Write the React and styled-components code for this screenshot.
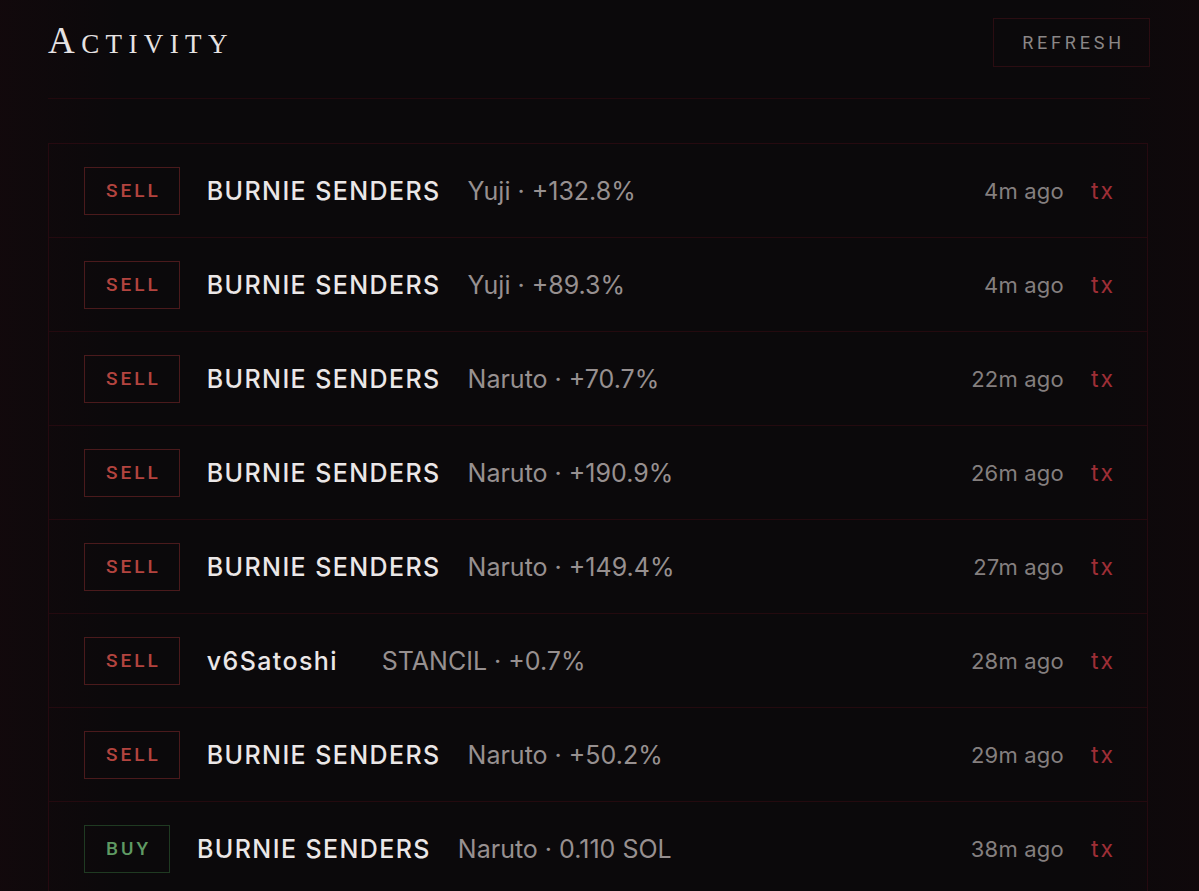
import React from 'react'
import styled, { createGlobalStyle } from 'styled-components'

const GlobalStyle = createGlobalStyle`
  html, body {
    margin: 0;
    padding: 0;
    background: #0b090b;
  }
  body {
    font-family: Inter, "Noto Sans", sans-serif;
    color: #e8e4e4;
  }
`

const Page = styled.div`
  min-height: 100vh;
  padding: 18px 49px 0 48px;
  box-sizing: border-box;
  background:
    linear-gradient(90deg, rgba(40, 8, 14, 0.22) 0%, rgba(0,0,0,0) 10%, rgba(0,0,0,0) 90%, rgba(30, 6, 10, 0.22) 100%),
    #0b090b;
`

const Header = styled.header`
  display: flex;
  align-items: center;
  justify-content: space-between;
  padding-bottom: 31px;
  border-bottom: 1px solid #22090e;
`

const Title = styled.h1`
  margin: -4px 0 0;
  font-family: "Liberation Serif", "DejaVu Serif", serif;
  font-weight: 400;
  font-size: 27px;
  text-transform: uppercase;
  letter-spacing: 6.4px;
  color: #e6e2e2;
  line-height: 1;
  &::first-letter {
    font-size: 37px;
  }
`

const RefreshButton = styled.button`
  width: 157px;
  height: 49px;
  background: transparent;
  border: 1px solid #2b0d12;
  color: #8a8686;
  font-family: Roboto, "Liberation Sans", sans-serif;
  font-size: 18px;
  letter-spacing: 3.8px;
  padding: 0 0 0 4px;
  text-transform: uppercase;
  cursor: pointer;
`

const List = styled.div`
  margin-top: 44px;
  margin-right: 2px;
  border: 1px solid #260a10;
  border-bottom: none;
`

const Row = styled.div`
  display: flex;
  align-items: center;
  height: 94px;
  padding: 0 34px 0 35px;
  box-sizing: border-box;
  border-bottom: 1px solid #240a0f;
  gap: 27px;
`

const Badge = styled.span`
  display: inline-flex;
  align-items: center;
  justify-content: center;
  height: 48px;
  padding: 0 18px 0 21px;
  box-sizing: border-box;
  border: 1.5px solid ${p => (p.$buy ? '#1f3a22' : '#4a1a1c')};
  color: ${p => (p.$buy ? '#5f9a63' : '#b3443f')};
  font-family: Roboto, "Liberation Sans", sans-serif;
  font-weight: 500;
  font-size: 19px;
  letter-spacing: 3px;
`

const Name = styled.span`
  min-width: 148px;
  font-size: 25px;
  font-weight: 500;
  color: #ebe7e7;
  letter-spacing: 1.4px;
`

const Detail = styled.span`
  flex: 1;
  font-size: 25px;
  font-weight: 400;
  color: #979090;
  letter-spacing: 0;
`

const Time = styled.span`
  font-size: 22px;
  color: #847f7f;
  letter-spacing: 0.2px;
`

const TxLink = styled.a`
  font-size: 23px;
  color: #9e2e36;
  text-decoration: none;
  letter-spacing: 2px;
  margin-right: -2px;
`

const rows = [
  { type: 'SELL', name: 'BURNIE SENDERS', detail: 'Yuji · +132.8%', time: '4m ago' },
  { type: 'SELL', name: 'BURNIE SENDERS', detail: 'Yuji · +89.3%', time: '4m ago' },
  { type: 'SELL', name: 'BURNIE SENDERS', detail: 'Naruto · +70.7%', time: '22m ago' },
  { type: 'SELL', name: 'BURNIE SENDERS', detail: 'Naruto · +190.9%', time: '26m ago' },
  { type: 'SELL', name: 'BURNIE SENDERS', detail: 'Naruto · +149.4%', time: '27m ago' },
  { type: 'SELL', name: 'v6Satoshi', detail: 'STANCIL · +0.7%', time: '28m ago' },
  { type: 'SELL', name: 'BURNIE SENDERS', detail: 'Naruto · +50.2%', time: '29m ago' },
  { type: 'BUY', name: 'BURNIE SENDERS', detail: 'Naruto · 0.110 SOL', time: '38m ago' },
]

const App = () => (
  <>
    <GlobalStyle />
    <Page>
      <Header>
        <Title>Activity</Title>
        <RefreshButton>Refresh</RefreshButton>
      </Header>
      <List>
        {rows.map((r, i) => (
          <Row key={i}>
            <Badge $buy={r.type === 'BUY'}>{r.type}</Badge>
            <Name>{r.name}</Name>
            <Detail>{r.detail}</Detail>
            <Time>{r.time}</Time>
            <TxLink href="#">tx</TxLink>
          </Row>
        ))}
      </List>
    </Page>
  </>
)

export default App
